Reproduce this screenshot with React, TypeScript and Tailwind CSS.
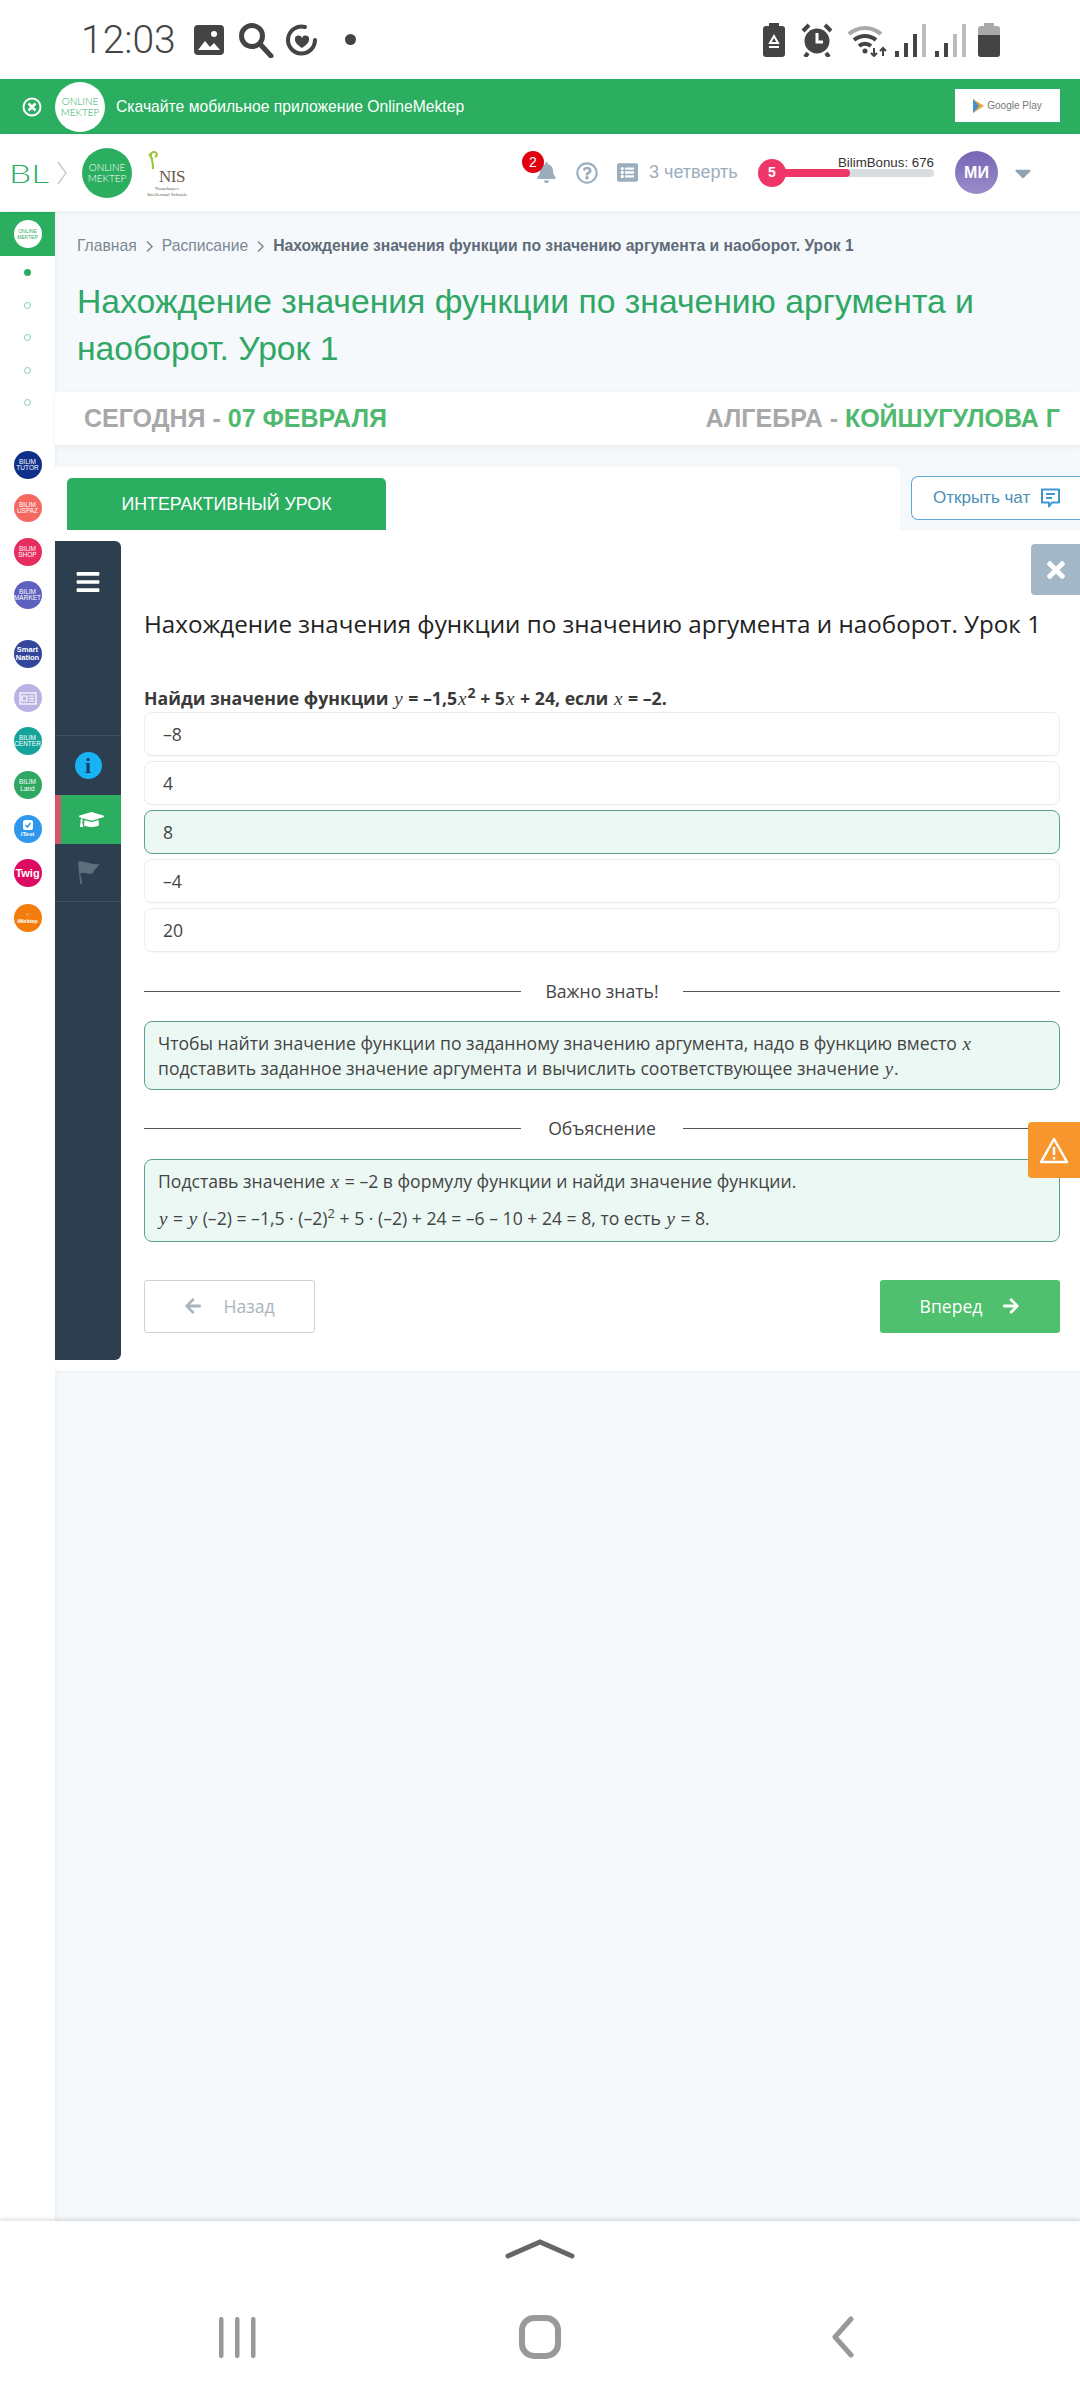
import type { ReactNode } from "react";
import {
  FaArrowLeft,
  FaArrowRight,
  FaBars,
  FaBell,
  FaCaretDown,
  FaGraduationCap,
  FaListAlt,
  FaRegQuestionCircle,
  FaTimes,
} from "react-icons/fa";

const sans = "font-['Liberation_Sans',Arial,sans-serif]";
const open = "font-['Open_Sans','Noto_Sans',sans-serif]";

function M({ children }: { children: ReactNode }) {
  return <span className="font-['Liberation_Serif',serif] italic font-normal px-[1px] text-[1.08em]">{children}</span>;
}

function StatusBar() {
  return (
    <div className="h-[79px] bg-white flex items-center pl-[81px] pr-[80px] text-[#444]">
      <span className="font-['Roboto',sans-serif] text-[39px] leading-none font-light mt-[2px] w-[112px]">12:03</span>
      <svg width="32" height="32" viewBox="0 0 32 32" className="mt-[1px]">
        <rect x="1" y="1" width="30" height="30" rx="4" fill="#444" />
        <path d="M5 26l7-9 5 6 4-4 6 7z" fill="#fff" />
        <circle cx="21" cy="10" r="3" fill="#fff" />
      </svg>
      <svg width="36" height="36" viewBox="0 0 36 36" className="ml-[13px]" fill="none" stroke="#444" strokeWidth="5">
        <circle cx="14" cy="14" r="10.5" />
        <path d="M22 22l11 12" strokeLinecap="round" />
      </svg>
      <svg width="34" height="34" viewBox="0 0 34 34" className="ml-[11px]" fill="none">
        <path d="M20 4A13.5 13.5 0 1 0 30 17" stroke="#444" strokeWidth="4" strokeLinecap="round" />
        <path d="M17 25c-4-3-7-5-7-8.500a3.500 3.500 0 0 1 7-1 3.500 3.500 0 0 1 7 1c0 3.500-3 5.500-7 8.500z" fill="#444" />
      </svg>
      <span className="w-[11px] h-[11px] rounded-full bg-[#444] ml-[26px]" />
      <div className="flex-1" />
      <svg width="22" height="34" viewBox="0 0 22 34" className="mr-[-2px]">
        <rect x="6" y="0" width="10" height="4" fill="#444" />
        <rect x="0" y="3" width="22" height="31" rx="3" fill="#444" />
        <path d="M7 20l4-7 4 7zM6 24h10" stroke="#fff" strokeWidth="2" fill="none" />
      </svg>
      <svg width="32" height="34" viewBox="0 0 32 34" className="ml-[18px]" fill="none">
        <circle cx="16" cy="18" r="12.500" fill="#444" />
        <path d="M16 10v9h6" stroke="#fff" strokeWidth="3" />
        <path d="M2 8l6-6M30 8l-6-6M7 30l-3 4M25 30l3 4" stroke="#444" strokeWidth="4" />
      </svg>
      <svg width="42" height="34" viewBox="0 0 42 34" className="ml-[14px]" fill="none">
        <path d="M2 11a24 24 0 0 1 32 0" stroke="#aaa" strokeWidth="4" />
        <path d="M7 17a17 17 0 0 1 22 0M12 23a9 9 0 0 1 12 0" stroke="#444" strokeWidth="4" />
        <circle cx="18" cy="28" r="2.500" fill="#444" />
        <path d="M27 25v8M24 30l3 3 3-3M36 33v-8M33 28l3-3 3 3" stroke="#444" strokeWidth="2" />
      </svg>
      <svg width="32" height="34" viewBox="0 0 32 34" className="ml-[5px]">
        <rect x="1" y="28" width="4" height="6" fill="#444" />
        <rect x="10" y="20" width="4" height="14" fill="#444" />
        <rect x="19" y="11" width="4" height="23" fill="#444" />
        <rect x="28" y="1" width="4" height="33" fill="#bbb" />
      </svg>
      <svg width="32" height="34" viewBox="0 0 32 34" className="ml-[8px]">
        <rect x="1" y="28" width="4" height="6" fill="#444" />
        <rect x="10" y="20" width="4" height="14" fill="#444" />
        <rect x="19" y="11" width="4" height="23" fill="#bbb" />
        <rect x="28" y="1" width="4" height="33" fill="#bbb" />
      </svg>
      <svg width="22" height="34" viewBox="0 0 22 34" className="ml-[12px]">
        <rect x="6" y="0" width="10" height="4" fill="#aaa" />
        <rect x="0" y="3" width="22" height="31" rx="3" fill="#aaa" />
        <path d="M0 12h22v19a3 3 0 0 1-3 3H3a3 3 0 0 1-3-3z" fill="#444" />
      </svg>
    </div>
  );
}

function Banner() {
  return (
    <div className={`h-[55px] bg-[#2bae60] flex items-center text-white ${sans}`}>
      <svg width="20" height="20" viewBox="0 0 20 20" className="ml-[22px]" fill="none" stroke="#fff" strokeWidth="2">
        <circle cx="10" cy="10" r="8.500" />
        <path d="M6.500 6.500l7 7M13.500 6.500l-7 7" strokeWidth="2.500" />
      </svg>
      <div className="w-[50px] h-[50px] rounded-full bg-white ml-[13px] flex flex-col items-center justify-center text-[#2bae60] font-['Lato',sans-serif] font-light text-[10px] leading-[11px]">
        <span>ONLINE</span>
        <span>MEKTEP</span>
      </div>
      <span className="text-[15.700px] ml-[11px]">Скачайте мобильное приложение OnlineMektep</span>
      <div className="ml-auto mr-[20px] mb-[2px] w-[105px] h-[33px] bg-white flex items-center justify-center gap-[3px] text-[#777] text-[10px]">
        <svg width="11" height="14" viewBox="0 0 11 14">
          <path d="M0 0l11 7-11 7z" fill="#e8a33d" />
          <path d="M0 0l6 7-6 7z" fill="#3f8fd2" />
        </svg>
        <span>Google Play</span>
      </div>
    </div>
  );
}

function Header() {
  return (
    <div className={`h-[77px] bg-white flex items-center relative z-10 shadow-[0_1px_4px_rgba(0,0,0,0.08)] ${sans}`}>
      <span className="ml-[9px] w-[39px] text-[26px] font-['Lato',sans-serif] font-light text-[#2bae60] leading-none scale-x-[1.35] origin-left">BL</span>
      <svg width="12" height="26" viewBox="0 0 12 26" className="ml-[8px]" fill="none" stroke="#ccc" strokeWidth="1.500">
        <path d="M2 2l8 11-8 11" />
      </svg>
      <div className="w-[50px] h-[50px] rounded-full bg-[#2bae60] ml-[14px] flex flex-col items-center justify-center text-white font-['Lato',sans-serif] font-light text-[10px] leading-[11px]">
        <span>ONLINE</span>
        <span>MEKTEP</span>
      </div>
      <div className="ml-[12px] w-[46px] relative h-[50px] flex flex-col items-center justify-end font-['Liberation_Serif',serif] text-[#6b5a4a]">
        <svg width="16" height="22" viewBox="0 0 16 22" className="absolute left-0 top-0" fill="none" stroke="#9cc43c" strokeWidth="2">
          <path d="M9 21C9 14 8 9 5 6M9 11c-3-1-3-7 1-7 3 0 4 4 1 5" />
        </svg>
        <span className="text-[17px] leading-[18px] tracking-[-0.500px] pl-[10px]">NIS</span>
        <span className="text-[5px] leading-[6px] text-center">Nazarbayev Intellectual Schools</span>
      </div>
      <div className="ml-auto flex items-center text-[#9aaebd]">
        <div className="relative mr-[19px] ml-[1px]">
          <FaBell size={21} />
          <span className="absolute -left-[14px] -top-[11px] w-[22px] h-[22px] rounded-full bg-[#e1000f] text-white text-[14px] flex items-center justify-center">2</span>
        </div>
        <FaRegQuestionCircle size={22} />
        <FaListAlt size={21} className="ml-[19px]" />
        <span className="text-[18px] ml-[11px] w-[88px] whitespace-nowrap">3 четверть</span>
        <div className="relative w-[176px] h-[30px] ml-[21px]">
          <span className="absolute right-0 -top-[5px] text-[13.300px] text-[#333] whitespace-nowrap">BilimBonus: 676</span>
          <div className="absolute left-[12px] right-0 top-[11px] h-[8px] rounded-full bg-[#d8dde2]">
            <div className="w-[80px] h-full rounded-full bg-[#ee3768]" />
          </div>
          <span className="absolute left-0 top-[1px] w-[28px] h-[28px] rounded-full bg-[#ee3768] text-white text-[14px] font-bold flex items-center justify-center">5</span>
        </div>
        <span className="w-[43px] h-[43px] ml-[21px] rounded-full bg-gradient-to-b from-[#7565b5] to-[#9c8ccb] text-white text-[16px] font-bold flex items-center justify-center">МИ</span>
        <FaCaretDown size={26} className="ml-[12px] mr-[44px] text-[#8fa3b3]" />
      </div>
    </div>
  );
}

const railLogos: { bg: string; top: ReactNode; bottom: string; mt: string; size: string }[] = [
  { bg: "bg-[#0e2f8a]", top: "BILIM", bottom: "TUTOR", mt: "mt-[45px]", size: "text-[6.500px] leading-[6.500px]" },
  { bg: "bg-[#f4695f]", top: "BILIM", bottom: "USPAZ", mt: "mt-[15px]", size: "text-[6.500px] leading-[6.500px]" },
  { bg: "bg-[#e72c60]", top: "BILIM", bottom: "SHOP", mt: "mt-[16px]", size: "text-[6.500px] leading-[6.500px]" },
  { bg: "bg-[#5d60bd]", top: "BILIM", bottom: "MARKET", mt: "mt-[15px]", size: "text-[6.500px] leading-[6.500px]" },
  { bg: "bg-[#33469c]", top: "Smart", bottom: "Nation", mt: "mt-[31px]", size: "text-[7.500px] leading-[8px] font-bold" },
  {
    bg: "bg-[#b9b3e3]",
    top: (
      <svg width="18" height="13" viewBox="0 0 18 13" fill="none" stroke="#fff" strokeWidth="1.200">
        <rect x="1" y="1" width="16" height="11" />
        <path d="M3 4h5v5H3zM10 4h5M10 6.500h5M10 9h5" />
      </svg>
    ),
    bottom: "",
    mt: "mt-[16px]",
    size: "",
  },
  { bg: "bg-[#14a49c]", top: "BILIM", bottom: "CENTER", mt: "mt-[15px]", size: "text-[6.500px] leading-[6.500px]" },
  { bg: "bg-[#2fa864]", top: "BILIM", bottom: "Land", mt: "mt-[16px]", size: "text-[6.500px] leading-[7px]" },
  {
    bg: "bg-[#2f98ee]",
    top: (
      <svg width="12" height="11" viewBox="0 0 12 11">
        <rect x="1" y="0" width="10" height="10" rx="2" fill="#fff" />
        <path d="M3.500 5l2 2 3-4" stroke="#2f98ee" strokeWidth="1.500" fill="none" />
      </svg>
    ),
    bottom: "iTest",
    mt: "mt-[16px]",
    size: "text-[6px] leading-[7px] font-bold",
  },
  { bg: "bg-[#dd0a62]", top: "Twig", bottom: "", mt: "mt-[16px]", size: "text-[11px] leading-none font-bold" },
  { bg: "bg-[#f27c0c]", top: "☼", bottom: "iMektep", mt: "mt-[17px]", size: "text-[5.500px] leading-[7px] font-bold" },
];

function Rail() {
  return (
    <div className={`w-[55px] shrink-0 bg-white flex flex-col items-center ${sans}`}>
      <div className="w-full h-[44px] bg-[#2bae60] flex items-center justify-center">
        <div className="w-[28px] h-[28px] rounded-full bg-white flex flex-col items-center justify-center text-[5px] leading-[6px] text-[#2bae60]">
          <span>ONLINE</span>
          <span>MEKTEP</span>
        </div>
      </div>
      <span className="w-[7px] h-[7px] rounded-full bg-[#2bae60] mt-[13px]" />
      {[0, 1, 2, 3].map((i) => (
        <span key={i} className="w-[7px] h-[7px] rounded-full border border-[#7fd0a2] mt-[25.500px]" />
      ))}
      {railLogos.map((l, i) => (
        <div
          key={i}
          className={`w-[28px] h-[28px] rounded-full text-white ${l.bg} ${l.mt} ${l.size} shrink-0 flex flex-col items-center justify-center`}
        >
          {l.top}
          {l.bottom && <span>{l.bottom}</span>}
        </div>
      ))}
    </div>
  );
}

function Option({ text, active }: { text: string; active?: boolean }) {
  return (
    <div
      className={`h-[44px] rounded-[8px] border flex items-center pl-[18px] text-[17.600px] text-[#444] ${
        active ? "bg-[#ebf8f3] border-[#5f9f92]" : "bg-white border-[#ececec] shadow-[0_1px_1px_rgba(0,0,0,0.03)]"
      }`}
    >
      {text}
    </div>
  );
}

function Divider({ label }: { label: string }) {
  return (
    <div className="flex items-center text-[17.600px] text-[#444]">
      <div className="w-[377px] h-px bg-[#555]" />
      <span className="flex-1 text-center">{label}</span>
      <div className="w-[377px] h-px bg-[#555]" />
    </div>
  );
}

function LessonPanel() {
  return (
    <div className={`relative bg-white flex pt-[11px] pb-[11px] shadow-[0_1px_2px_rgba(0,0,0,0.05)] ${open}`}>
      <div className="w-[66px] h-[819px] bg-[#2c3e50] rounded-tr-[6px] rounded-br-[6px] flex flex-col shrink-0">
        <div className="h-[194px] flex justify-center pt-[28px] text-white">
          <FaBars size={26} />
        </div>
        <div className="h-[60px] border-t border-[#3e5064] flex items-center justify-center">
          <span className="w-[27px] h-[27px] rounded-full bg-[#17b3f5] text-[#17405f] font-['Liberation_Serif',serif] font-bold text-[22px] flex items-center justify-center">i</span>
        </div>
        <div className="h-[49px] bg-[#2bae60] border-l-[6px] border-[#d0586a] flex items-center justify-center text-white">
          <FaGraduationCap size={25} />
        </div>
        <div className="h-[58px] border-b border-[#3e5064] flex items-center justify-center text-[#5f6f7e]">
          <svg width="25" height="25" viewBox="0 0 24 24" fill="currentColor">
            <path d="M2 2c6-2 10 3 21 2-3 3-6 6-7 9-5 1-8-2-12 0l2 10H4z" />
          </svg>
        </div>
      </div>

      <div className="flex-1 pl-[23px] pr-[20px] flex flex-col">
        <h2 className="text-[24.200px] leading-[34px] text-[#222] mt-[66px] whitespace-nowrap">
          Нахождение значения функции по значению аргумента и наоборот. Урок 1
        </h2>
        <p className="text-[17.700px] leading-[24px] font-bold text-[#3a3a3a] mt-[45px]">
          Найди значение функции <M>y</M> = –1,5<M>x</M>
          <sup className="text-[14px]">2</sup> + 5<M>x</M> + 24, если <M>x</M> = –2.
        </p>
        <div className="flex flex-col gap-[5px] mt-[1px]">
          <Option text="–8" />
          <Option text="4" />
          <Option text="8" active />
          <Option text="–4" />
          <Option text="20" />
        </div>

        <div className="mt-[26px]">
          <Divider label="Важно знать!" />
        </div>
        <div className="mt-[17px] h-[69px] rounded-[8px] border border-[#5f9f92] bg-[#ebf8f3] px-[13px] pt-[9px] text-[17.600px] leading-[24px] text-[#444]">
          Чтобы найти значение функции по заданному значению аргумента, надо в функцию вместо <M>x</M> подставить заданное значение аргумента и вычислить соответствующее значение <M>y</M>.
        </div>
        <div className="mt-[25px]">
          <Divider label="Объяснение" />
        </div>
        <div className="mt-[17px] h-[83px] rounded-[8px] border border-[#5f9f92] bg-[#ebf8f3] px-[13px] pt-[9px] text-[17.600px] leading-[24px] text-[#444]">
          <p>
            Подставь значение <M>x</M> = –2 в формулу функции и найди значение функции.
          </p>
          <p className="mt-[12px]">
            <M>y</M> = <M>y</M> (–2) = –1,5 · (–2)<sup className="text-[13px]">2</sup> + 5 · (–2) + 24 = –6 – 10 + 24 = 8, то есть <M>y</M> = 8.
          </p>
        </div>

        <div className="mt-[38px] flex justify-between">
          <button className="w-[171px] h-[53px] rounded-[3px] border border-[#cfd3d6] bg-white flex items-center justify-center gap-[21px] text-[17.600px] text-[#a9b4bd]">
            <FaArrowLeft size={18} /> Назад
          </button>
          <button className="w-[180px] h-[53px] rounded-[3px] bg-[#4fc06e] flex items-center justify-center gap-[20px] text-[17.600px] text-white">
            Вперед <FaArrowRight size={18} />
          </button>
        </div>
      </div>

      <div className="absolute right-0 top-[14px] w-[49px] h-[51px] bg-[#a3b8c6] rounded-l-[4px] flex items-center justify-center text-white">
        <FaTimes size={26} />
      </div>
      <div className="absolute right-0 top-[592px] w-[52px] h-[56px] bg-[#f6962d] rounded-l-[4px] flex items-center justify-center">
        <svg width="30" height="28" viewBox="0 0 30 28" fill="none" stroke="#fff" strokeWidth="2.500" strokeLinejoin="round">
          <path d="M15 3L2 26h26z" />
          <path d="M15 11v8M15 21v2.500" />
        </svg>
      </div>
    </div>
  );
}

function NavBar() {
  return (
    <div className="h-[179px] bg-white relative z-10 shadow-[0_-2px_4px_rgba(0,0,0,0.12)] flex flex-col items-center">
      <svg width="70" height="20" viewBox="0 0 70 20" className="mt-[18px]" fill="none" stroke="#666" strokeWidth="5" strokeLinecap="round">
        <path d="M3 17L35 3l32 14" />
      </svg>
      <div className="flex items-center mt-[56px] w-full h-[44px] relative">
        <svg width="37" height="41" viewBox="0 0 37 41" className="ml-[219px]" fill="#999">
          <rect x="0" y="0" width="4.500" height="41" rx="2" />
          <rect x="16" y="0" width="4.500" height="41" rx="2" />
          <rect x="32" y="0" width="4.500" height="41" rx="2" />
        </svg>
        <svg width="42" height="44" viewBox="0 0 42 44" className="ml-[263px]" fill="none" stroke="#999" strokeWidth="6">
          <rect x="3" y="3" width="36" height="38" rx="12" />
        </svg>
        <svg width="23" height="42" viewBox="0 0 23 42" className="ml-[270px]" fill="none" stroke="#999" strokeWidth="5" strokeLinecap="round" strokeLinejoin="round">
          <path d="M20 3L4 21l16 18" />
        </svg>
      </div>
    </div>
  );
}

function Crumb() {
  return (
    <svg width="9" height="13" viewBox="0 0 9 13" className="mx-[8px]" fill="none" stroke="#7c8894" strokeWidth="1.500">
      <path d="M2 1.500l5 5-5 5" />
    </svg>
  );
}

export default function App() {
  return (
    <div className="w-[1080px] h-[2400px] flex flex-col overflow-hidden bg-white">
      <StatusBar />
      <Banner />
      <Header />
      <div className="flex-1 flex min-h-0 pt-px">
        <Rail />
        <div className={`flex-1 bg-[#f5f9fc] shadow-[inset_2px_0_3px_rgba(0,0,0,0.03)] ${sans}`}>
          <div className="pl-[22px] pt-[22px] flex items-center text-[15.700px] leading-[24px] text-[#7c8894]">
            <span>Главная</span>
            <Crumb />
            <span>Расписание</span>
            <Crumb />
            <span className="font-bold text-[#5f6b78]">Нахождение значения функции по значению аргумента и наоборот. Урок 1</span>
          </div>
          <h1 className="pl-[22px] pr-[90px] mt-[20px] text-[33.700px] leading-[47px] text-[#30a764]">
            Нахождение значения функции по значению аргумента и наоборот. Урок 1
          </h1>
          <div className="mt-[20px] h-[53px] bg-white shadow-[0_2px_6px_rgba(0,0,0,0.06)] flex items-center justify-between pl-[29px] pr-[20px] text-[25px] font-bold text-[#a8a8a8]">
            <span>
              СЕГОДНЯ - <span className="text-[#4fb96f]">07 ФЕВРАЛЯ</span>
            </span>
            <span>
              АЛГЕБРА - <span className="text-[#4fb96f]">КОЙШУГУЛОВА Г</span>
            </span>
          </div>
          <div className="mt-[22px] h-[63px] flex">
            <div className="w-[845px] bg-white rounded-tr-[8px] pl-[12px] pt-[11px]">
              <div className="w-[319px] h-[52px] bg-[#2bae60] rounded-t-[5px] flex items-center justify-center text-white text-[17.800px]">
                ИНТЕРАКТИВНЫЙ УРОК
              </div>
            </div>
            <div className="flex-1 pl-[11px] pt-[9px]">
              <div className="h-[44px] rounded-l-[7px] border border-r-0 border-[#5fa9d6] bg-white flex items-center pl-[21px] gap-[10px] text-[17px] text-[#4c8fb8]">
                Открыть чат
                <svg width="21" height="21" viewBox="0 0 21 21" fill="none" stroke="#3f97d1" strokeWidth="2">
                  <path d="M2 1.500h17v13H12l-3 4v-4H2z" strokeLinejoin="round" />
                  <path d="M6 6h9M6 10h6" />
                </svg>
              </div>
            </div>
          </div>
          <LessonPanel />
        </div>
      </div>
      <NavBar />
    </div>
  );
}
